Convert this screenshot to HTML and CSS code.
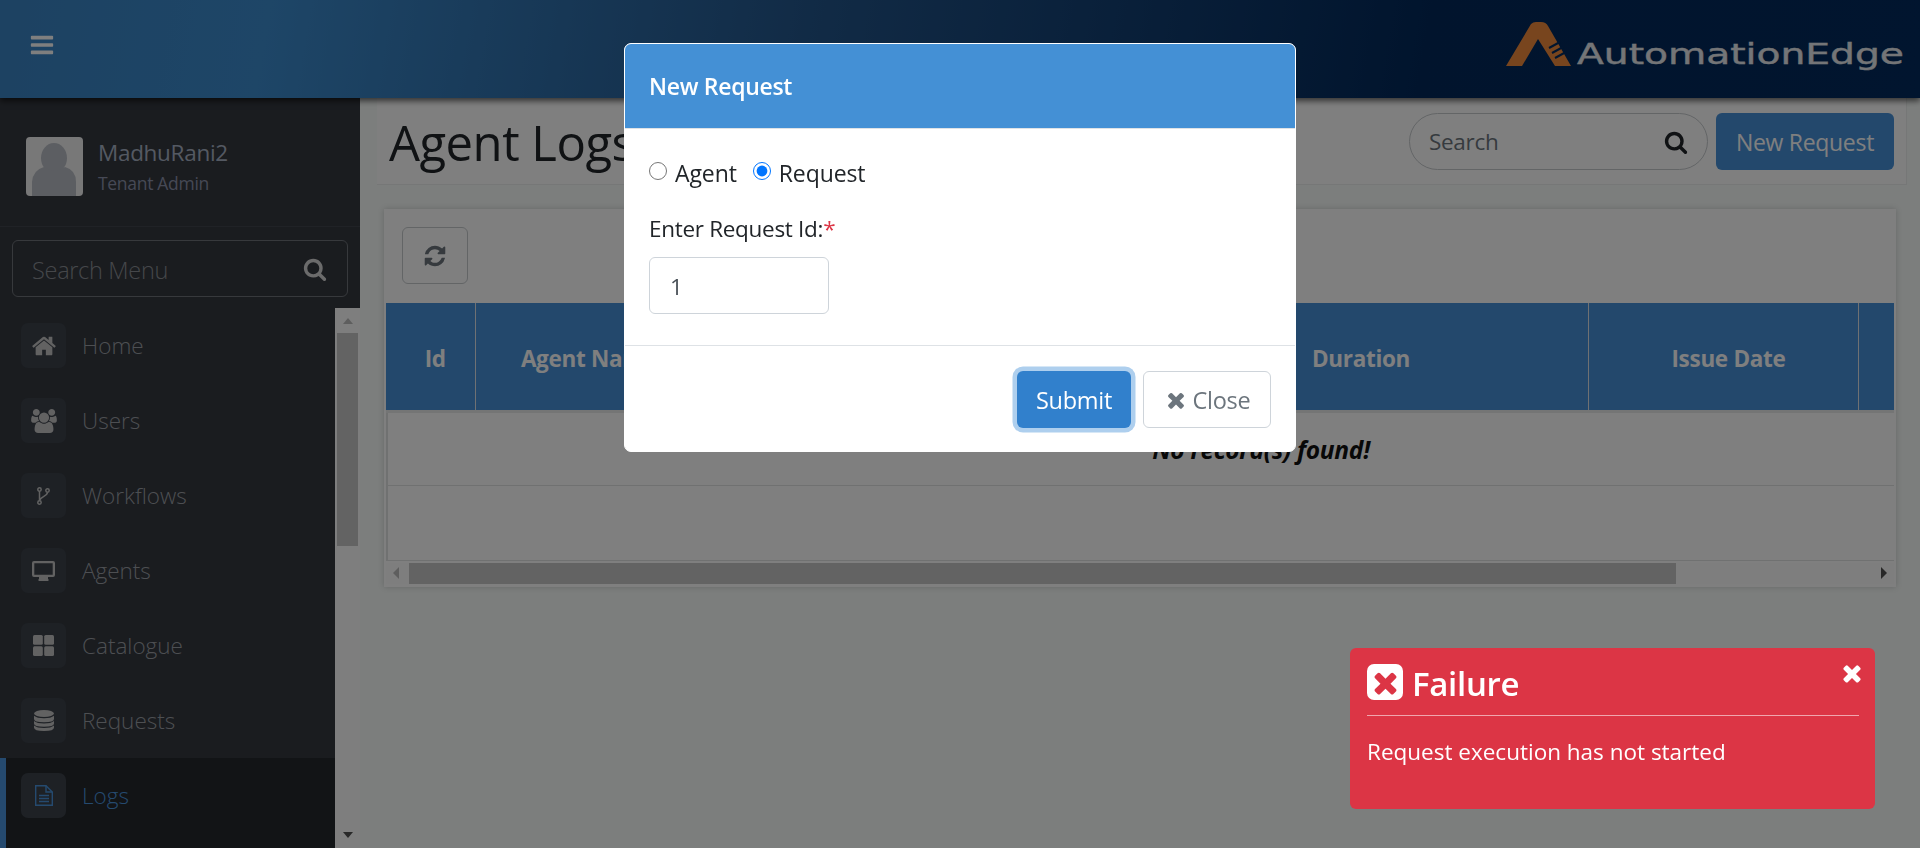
FILE: index.html
```html
<!DOCTYPE html>
<html>
<head>
    <meta charset="utf-8">
    <title>Agent Logs</title>
    <link rel="stylesheet" href="styles.css">
</head>
<body>
    <svg class="icon-defs" width="0" height="0">
        <symbol id="i-search" viewBox="0 0 1792 1792"><path d="M1216 832q0-185-131.500-316.500t-316.500-131.500-316.500 131.500-131.500 316.500 131.500 316.500 316.500 131.500 316.500-131.500 131.500-316.500zm512 832q0 52-38 90t-90 38q-54 0-90-38l-343-342q-179 124-399 124-143 0-273.500-55.500t-225-150-150-225-55.500-273.500 55.500-273.500 150-225 225-150 273.500-55.500 273.500 55.500 225 150 150 225 55.500 273.500q0 220-124 399l343 343q37 37 37 90z"/></symbol>
        <symbol id="i-times" viewBox="0 0 1792 1792"><path d="M1490 1322q0 40-28 68l-136 136q-28 28-68 28t-68-28l-294-294-294 294q-28 28-68 28t-68-28l-136-136q-28-28-28-68t28-68l294-294-294-294q-28-28-28-68t28-68l136-136q28-28 68-28t68 28l294 294 294-294q28-28 68-28t68 28l136 136q28 28 28 68t-28 68l-294 294 294 294q28 28 28 68z"/></symbol>
    </svg>

    <header class="topbar">
        <svg class="menu-toggle" viewBox="0 0 1792 1792"><path d="M1664 1344v128q0 26-19 45t-45 19h-1408q-26 0-45-19t-19-45v-128q0-26 19-45t45-19h1408q26 0 45 19t19 45zm0-512v128q0 26-19 45t-45 19h-1408q-26 0-45-19t-19-45v-128q0-26 19-45t45-19h1408q26 0 45 19t19 45zm0-512v128q0 26-19 45t-45 19h-1408q-26 0-45-19t-19-45v-128q0-26 19-45t45-19h1408q26 0 45 19t19 45z"/></svg>
        <div class="logo">
            <svg class="logo-mark" viewBox="0 0 65 45">
                <path d="M0 45 L25 3 Q27 1 30 1 L35 1 Q40 1 42 5 L65 45 L49 45 L32 18 L16 45 Z" fill="#f08a3c"/>
                <path d="M43 27 L54 21 M46 32 L57 26 M49 37 L60 31" stroke="#022a5e" stroke-width="2"/>
            </svg>
            <span class="logo-text">AutomationEdge</span>
        </div>
    </header>

    <div class="layout">
        <aside class="sidebar">
            <div class="user-block">
                <svg class="avatar" viewBox="0 0 57 59">
                    <rect width="57" height="59" rx="4" fill="#f0f0f0"/>
                    <ellipse cx="28" cy="21" rx="13" ry="15" fill="#b8bcc4"/>
                    <path d="M6 59 L6 45 Q7 33 18 30 Q28 37 39 30 Q50 33 50 45 L50 59 Z" fill="#b8bcc4"/>
                </svg>
                <div class="user-info">
                    <div class="user-name">MadhuRani2</div>
                    <div class="user-role">Tenant Admin</div>
                </div>
            </div>
            <div class="menu-search">
                <span>Search Menu</span>
                <svg class="menu-search-icon"><use href="#i-search"/></svg>
            </div>
            <div class="menu-wrap">
                <nav class="menu">
                    <a class="menu-item">
                        <span class="menu-icon"><svg viewBox="0 0 1792 1792" width="26" height="26"><path d="M1472 992v480q0 26-19 45t-45 19h-384v-384h-256v384h-384q-26 0-45-19t-19-45v-480q0-1 .5-3t.5-3l575-474 575 474q1 2 1 6zm223-69l-62 74q-8 9-21 11h-3q-13 0-21-7l-692-577-692 577q-12 8-24 7-13-2-21-11l-62-74q-8-10-7-23.500t11-21.500l719-599q32-26 76-26t76 26l244 204v-195q0-14 9-23t23-9h192q14 0 23 9t9 23v408l219 182q10 8 11 21.500t-7 23.500z"/></svg></span>
                        Home
                    </a>
                    <a class="menu-item">
                        <span class="menu-icon"><svg viewBox="0 0 1920 1792" width="26" height="24"><path d="M593 896q-162 5-265 128h-134q-82 0-138-40.500t-56-118.500q0-353 124-353 6 0 43.500 21t97.500 42.500 119 21.500q67 0 133-23-5 37-5 66 0 139 81 256zm1071 637q0 120-73 189.500t-194 69.500h-874q-121 0-194-69.500t-73-189.500q0-53 3.500-103.500t14-109 26.500-108.500 43-97.500 62-81 85.500-53.500 111.500-20q10 0 43 21.500t73 48 107 48 135 21.500 135-21.500 107-48 73-48 43-21.500q61 0 111.500 20t85.500 53.500 62 81 43 97.500 26.500 108.500 14 109 3.500 103.500zm-1024-1277q0 106-75 181t-181 75-181-75-75-181 75-181 181-75 181 75 75 181zm704 384q0 159-112.500 271.500t-271.500 112.500-271.500-112.500-112.500-271.500 112.500-271.500 271.500-112.500 271.500 112.500 112.500 271.500zm576 225q0 78-56 118.500t-138 40.500h-134q-103-123-265-128 81-117 81-256 0-29-5-66 66 23 133 23 59 0 119-21.500t97.500-42.500 43.500-21q124 0 124 353zm-128-609q0 106-75 181t-181 75-181-75-75-181 75-181 181-75 181 75 75 181z"/></svg></span>
                        Users
                    </a>
                    <a class="menu-item">
                        <span class="menu-icon"><svg class="icon-line" viewBox="0 0 13 18" width="13" height="18" stroke-width="1.500"><circle cx="2.500" cy="2.500" r="1.700"/><circle cx="2.500" cy="15.500" r="1.700"/><circle cx="10.500" cy="3.500" r="1.700"/><path d="M2.500 4.300V13.700M10.500 5.300C10.500 9.500 3.500 9 2.500 13.700"/></svg></span>
                        Workflows
                    </a>
                    <a class="menu-item">
                        <span class="menu-icon"><svg viewBox="0 0 23 20" width="23" height="20"><path fill-rule="evenodd" d="M2 0H21Q23 0 23 2V14Q23 16 21 16H2Q0 16 0 14V2Q0 0 2 0ZM2.300 2.300V13.700H20.700V2.300Z"/><rect x="7" y="16" width="9" height="2.200"/><rect x="6.500" y="18" width="10" height="2" rx="0.500"/></svg></span>
                        Agents
                    </a>
                    <a class="menu-item">
                        <span class="menu-icon"><svg viewBox="0 0 21 21" width="21" height="21"><rect width="9.800" height="9.800" rx="1.500"/><rect x="11.200" width="9.800" height="9.800" rx="1.500"/><rect y="11.200" width="9.800" height="9.800" rx="1.500"/><rect x="11.200" y="11.200" width="9.800" height="9.800" rx="1.500"/></svg></span>
                        Catalogue
                    </a>
                    <a class="menu-item">
                        <span class="menu-icon"><svg viewBox="0 0 20 21" width="20" height="21"><ellipse cx="10" cy="3.500" rx="10" ry="3.500"/><path d="M0 5.800Q3 8.300 10 8.300T20 5.800V9Q20 12.300 10 12.300T0 9Z"/><path d="M0 11Q3 13.500 10 13.500T20 11V13.500Q20 16.800 10 16.800T0 13.500Z"/><path d="M0 15.500Q3 18 10 18T20 15.500V17.500Q20 21 10 21T0 17.500Z"/></svg></span>
                        Requests
                    </a>
                    <a class="menu-item active">
                        <span class="menu-icon"><svg class="icon-active" viewBox="0 0 18 21" width="18" height="21" stroke-width="1.400"><path d="M.7.7H11L17.300 7V20.300H.7Z"/><path d="M11 .7V7H17.300M4 10.500H14M4 13.500H14M4 16.500H14"/></svg></span>
                        Logs
                    </a>
                </nav>
                <div class="vscroll">
                    <span class="arrow arrow-up"></span>
                    <span class="vscroll-thumb"></span>
                    <span class="arrow arrow-down"></span>
                </div>
            </div>
        </aside>

        <main class="content">
            <div class="title-bar">
                <h1 class="page-title">Agent Logs</h1>
                <div class="title-actions">
                    <div class="search-pill">
                        <span>Search</span>
                        <svg class="search-pill-icon"><use href="#i-search"/></svg>
                    </div>
                    <button class="btn-primary">New Request</button>
                </div>
            </div>

            <section class="card">
                <div class="card-tools">
                    <button class="btn-refresh"><svg viewBox="0 0 1792 1792" width="24" height="24"><path d="M1639 1056q0 5-1 7-64 268-268 434.500t-478 166.500q-146 0-282.500-55t-243.500-157l-129 129q-19 19-45 19t-45-19-19-45v-448q0-26 19-45t45-19h448q26 0 45 19t19 45-19 45l-137 137q71 66 161 102t187 36q134 0 250-65t186-179q11-17 53-117 8-23 30-23h192q13 0 22.500 9.500t9.500 22.500zm25-800v448q0 26-19 45t-45 19h-448q-26 0-45-19t-19-45 19-45l138-138q-148-137-349-137-134 0-250 65t-186 179q-11 17-53 117-8 23-30 23h-199q-13 0-22.500-9.500t-9.500-22.500v-7q65-268 270-434.500t480-166.500q146 0 284 55.500t245 156.500l130-129q19-19 45-19t45 19 19 45z"/></svg></button>
                </div>
                <div class="table-wrap">
                    <table class="log-table">
                        <colgroup>
                            <col class="c-id"><col class="c-agent"><col class="c-request"><col class="c-duration"><col class="c-issue"><col class="c-last">
                        </colgroup>
                        <thead>
                            <tr>
                                <th class="th-id">Id</th>
                                <th>Agent Name</th>
                                <th>Request Id</th>
                                <th>Duration</th>
                                <th class="th-issue">Issue Date</th>
                                <th></th>
                            </tr>
                        </thead>
                        <tbody>
                            <tr class="row-empty"><td colspan="6">No record(s) found!</td></tr>
                            <tr class="row-blank"><td colspan="6"></td></tr>
                        </tbody>
                    </table>
                </div>
                <div class="hscroll">
                    <span class="arrow arrow-left"></span>
                    <span class="hscroll-thumb"></span>
                    <span class="arrow arrow-right"></span>
                </div>
            </section>
        </main>
    </div>

    <div class="backdrop"></div>

    <div class="modal">
        <div class="modal-header">New Request</div>
        <div class="modal-body">
            <div class="radio-row">
                <label class="radio-label"><input type="radio" name="kind"> Agent</label>
                <label class="radio-label"><input type="radio" name="kind" checked> Request</label>
            </div>
            <label class="field-label" for="request-id">Enter Request Id:<span class="required">*</span></label>
            <input class="field-input" id="request-id" type="text" value="1">
        </div>
        <div class="modal-footer">
            <button class="btn-submit">Submit</button>
            <button class="btn-close"><svg width="24" height="24"><use href="#i-times"/></svg> Close</button>
        </div>
    </div>

    <div class="toast">
        <svg class="toast-close"><use href="#i-times"/></svg>
        <div class="toast-title">
            <span class="toast-icon"><svg width="33" height="33"><use href="#i-times"/></svg></span>
            Failure
        </div>
        <div class="toast-text">Request execution has not started</div>
    </div>
</body>
</html>
```

FILE: styles.css
```css
* {
    box-sizing: border-box;
}
html, body {
    height: 100%;
}
body {
    margin: 0;
    overflow: hidden;
    background-color: #f8fcfa;
    color: #212529;
    font-family: "Open Sans", "Noto Sans", sans-serif;
    font-size: 22.5px;
    letter-spacing: -0.3px;
    line-height: 36px;
}
button {
    font: inherit;
    letter-spacing: inherit;
}
.icon-defs {
    position: absolute;
}

/* top bar */
.topbar {
    position: relative;
    z-index: 2;
    display: flex;
    align-items: center;
    justify-content: space-between;
    height: 98px;
    padding: 0 16px 0 29px;
    background: linear-gradient(100deg, #3a84c4 0%, #3c8ccf 14%, #23568c 42%, #02295b 74%, #022a5e 100%);
    box-shadow: 0 3px 6px rgba(0, 0, 0, 0.6);
}
.menu-toggle {
    width: 26px;
    height: 26px;
    margin-top: -8px;
    fill: #fff;
}
.logo {
    display: flex;
    align-items: flex-end;
    gap: 6px;
    margin-top: -12px;
}
.logo-mark {
    width: 65px;
    height: 45px;
}
.logo-text {
    display: block;
    width: 234px;
    margin-right: 93px;
    margin-bottom: -3px;
    color: #e8ebee;
    font-family: "DejaVu Sans", sans-serif;
    font-size: 28px;
    line-height: 28px;
    letter-spacing: 0;
    white-space: nowrap;
    -webkit-text-stroke: 0.4px #e8ebee;
    /* the real logo lettering is very wide */
    transform: scaleX(1.4);
    transform-origin: left bottom;
}

.layout {
    display: flex;
    height: 750px;
}

/* sidebar */
.sidebar {
    display: flex;
    flex-direction: column;
    flex: 0 0 360px;
    background-color: #34383f;
}
.user-block {
    display: flex;
    align-items: center;
    gap: 15px;
    height: 129px;
    padding: 0 26px;
    border-bottom: 1px solid #41454c;
}
.avatar {
    width: 57px;
    height: 59px;
    margin-top: 9px;
}
.user-info {
    margin-top: 12px;
}
.user-name {
    color: #a9b3c4;
    font-size: 22.5px;
    line-height: 30px;
}
.user-role {
    color: #8c92ab;
    font-size: 17.5px;
    line-height: 30px;
}
.menu-search {
    display: flex;
    align-items: center;
    justify-content: space-between;
    height: 57px;
    margin: 13px 12px 11px;
    padding: 3px 20px 0 19px;
    border: 1.500px solid #6e7278;
    border-radius: 6px;
    color: #8b8f95;
    font-size: 23.500px;
    font-weight: 300;
}
.menu-search-icon {
    width: 24px;
    height: 24px;
    margin-top: -3px;
    fill: #d6d6d6;
}
.menu-wrap {
    display: flex;
    flex: 1;
    min-height: 0;
}
.menu {
    flex: 1;
}
.menu-item {
    display: flex;
    align-items: center;
    gap: 16px;
    height: 75px;
    padding-left: 21px;
    color: #9a9ea4;
    font-weight: 300;
    letter-spacing: 0;
}
.menu-icon {
    display: flex;
    align-items: center;
    justify-content: center;
    width: 45px;
    height: 45px;
    border-radius: 7px;
    background-color: #3c424b;
}
.menu-icon svg {
    fill: #c4c4c4;
}
.menu-icon .icon-line {
    fill: none;
    stroke: #c4c4c4;
}
.menu-icon .icon-active {
    fill: none;
    stroke: #4a95de;
}
.menu-item.active {
    height: 90px;
    padding: 0 0 15px 15px;
    border-left: 6px solid #4a95de;
    background-color: #24282c;
    color: #4a95de;
}

/* fake scrollbars, same arrows for both */
.vscroll {
    display: flex;
    flex-direction: column;
    align-items: center;
    flex: 0 0 25px;
    background-color: #fcfcfc;
}
.vscroll-thumb {
    flex: 0 0 213px;
    width: 21px;
    background-color: #c6c6c6;
}
.arrow {
    display: block;
    width: 0;
    height: 0;
    border: 0 solid transparent;
}
.arrow-up {
    margin: 10px 0 9px;
    border-width: 0 5.500px 6px;
    border-bottom-color: #bcbcbc;
}
.arrow-down {
    margin-top: auto;
    margin-bottom: 10px;
    border-width: 6px 5.500px 0;
    border-top-color: #505050;
}
.arrow-left {
    margin: 0 10px 0 7px;
    border-width: 6px 6px 6px 0;
    border-right-color: #bcbcbc;
}
.arrow-right {
    margin-left: auto;
    margin-right: 7px;
    border-width: 6px 0 6px 6px;
    border-left-color: #505050;
}

/* main area */
.content {
    flex: 1;
    min-width: 0;
    padding: 0 13px 0 17px;
}
.title-bar {
    display: flex;
    align-items: center;
    justify-content: space-between;
    height: 87px;
    padding: 0 12px 0 12px;
    border-bottom: 1.500px solid #ecefee;
    border-right: 1.500px solid #ecefee;
    background-color: #fff;
}
.page-title {
    margin: 2px 0 0 0;
    color: #212529;
    font-size: 49px;
    font-weight: 400;
    line-height: 60px;
    letter-spacing: -0.5px;
}
.title-actions {
    display: flex;
    gap: 8px;
    margin-top: 1px;
}
.search-pill {
    display: flex;
    align-items: center;
    justify-content: space-between;
    width: 299px;
    height: 57px;
    padding: 0 19px;
    border: 1.500px solid #c6cacd;
    border-radius: 29px;
    color: #6c757d;
}
.search-pill-icon {
    width: 24px;
    height: 24px;
    fill: #212529;
}
.btn-primary {
    width: 178px;
    height: 57px;
    border: 0;
    border-radius: 6px;
    background-color: #4690d9;
    color: #fff;
    font-size: 23px;
}
.card {
    margin: 24px 11px 0 7px;
    padding: 0 2px 3px;
    background-color: #fff;
    box-shadow: 0 0 6px rgba(0, 0, 0, 0.18);
}
.card-tools {
    padding: 18px 16px 19px;
}
.btn-refresh {
    display: flex;
    align-items: center;
    justify-content: center;
    width: 66px;
    height: 57px;
    border: 1.500px solid #c6cacd;
    border-radius: 6px;
    background: none;
}
.btn-refresh svg {
    fill: #6c757d;
}
.table-wrap {
    overflow: hidden;
}
.log-table {
    width: 1750px;
    table-layout: fixed;
    border-collapse: collapse;
}
.c-id { width: 89px; }
.c-agent { width: 228px; }
.c-request { width: 431px; }
.c-duration { width: 454px; }
.c-issue { width: 270px; }
.c-last { width: 278px; }
.log-table th {
    height: 108px;
    padding: 6px 0 0;
    border-right: 1.500px solid #dfe3e6;
    background-color: #4690d9;
    color: #fff;
    font-weight: 700;
}
.log-table .th-id {
    padding-left: 10px;
}
.log-table .th-issue {
    padding-left: 11px;
}
.row-empty td {
    height: 74px;
    padding-top: 3px;
    border-top: 3px solid #e8eaea;
    border-bottom: 1.500px solid #e0e2e2;
    box-shadow: inset 2px 0 0 #e0e2e2;
    color: #111;
    font-size: 24.500px;
    font-style: italic;
    font-weight: 700;
    text-align: center;
}
.row-blank td {
    height: 75px;
    border-bottom: 1.500px solid #e0e2e2;
    box-shadow: inset 2px 0 0 #e0e2e2;
}
.hscroll {
    display: flex;
    align-items: center;
    height: 21px;
    margin-top: 2px;
    background-color: #fcfcfc;
}
.hscroll-thumb {
    width: 1267px;
    height: 21px;
    background-color: #c6c6c6;
}

/* things over the page */
.backdrop {
    position: fixed;
    inset: 0;
    z-index: 10;
    background-color: rgba(0, 0, 0, 0.5);
}
.modal {
    position: fixed;
    top: 43px;
    left: 624px;
    z-index: 11;
    width: 672px;
    height: 409px;
    overflow: hidden;
    border: 1px solid #fff;
    border-radius: 7px;
    background-color: #fff;
}
.modal-header {
    height: 85px;
    padding: 0 24px;
    border-bottom: 1.500px solid #dee2e6;
    background-color: #4490d5;
    color: #fff;
    font-size: 23px;
    font-weight: 600;
    line-height: 85px;
}
.modal-body {
    height: 217px;
    padding: 26px 24px 0;
    border-bottom: 1.500px solid #dee2e6;
}
.radio-row {
    display: flex;
    gap: 16px;
    height: 36px;
    margin-bottom: 20px;
    font-size: 23px;
    letter-spacing: -0.1px;
}
.radio-label {
    display: flex;
    align-items: center;
    gap: 8px;
}
.radio-label input {
    width: 18px;
    height: 18px;
    margin: 0;
    position: relative;
    top: -2px;
}
.field-label {
    display: block;
    margin-bottom: 10px;
}
.required {
    color: #dc3545;
}
.field-input {
    display: block;
    width: 180px;
    height: 57px;
    padding: 2px 20px 0;
    border: 1.500px solid #ced4da;
    border-radius: 6px;
    color: #495057;
    font: inherit;
}
.modal-footer {
    display: flex;
    justify-content: flex-end;
    gap: 12px;
    padding: 25px 24px 0;
}
.btn-submit {
    width: 114px;
    height: 57px;
    border: 0;
    border-radius: 6px;
    background-color: #3180cc;
    box-shadow: 0 0 0 4.500px #aecfee;
    color: #fff;
    font-size: 23.500px;
}
.btn-close {
    display: flex;
    align-items: center;
    justify-content: center;
    gap: 5px;
    width: 128px;
    height: 57px;
    border: 1.500px solid #ced4da;
    border-radius: 6px;
    background-color: #fff;
    color: #6c757d;
    font-size: 23.500px;
}
.btn-close svg {
    fill: #6c757d;
}
.toast {
    position: fixed;
    top: 648px;
    left: 1350px;
    z-index: 12;
    width: 525px;
    height: 161px;
    padding: 16px 16px 0 17px;
    border-radius: 6px;
    background-color: #dc3545;
    color: #fff;
}
.toast-close {
    position: absolute;
    top: 12px;
    right: 10px;
    width: 26px;
    height: 26px;
    fill: #fff;
}
.toast-title {
    display: flex;
    align-items: flex-start;
    gap: 9px;
    height: 52px;
    border-bottom: 1.500px solid #f0a6ae;
    font-size: 33px;
    font-weight: 600;
    line-height: 40px;
}
.toast-icon {
    display: flex;
    align-items: center;
    justify-content: center;
    width: 36px;
    height: 36px;
    border-radius: 7px;
    background-color: #fff;
}
.toast-icon svg {
    fill: #dc3545;
}
.toast-text {
    margin-top: 18px;
    letter-spacing: 0;
}
```
